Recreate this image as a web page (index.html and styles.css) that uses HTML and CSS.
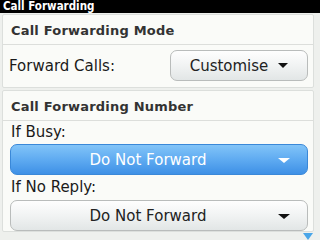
FILE: index.html
```html
<!doctype html>
<html lang="en">
<head>
<meta charset="utf-8">
<title>Call Forwarding</title>
<link rel="stylesheet" href="styles.css">
</head>
<body>

	<header class="titlebar">Call Forwarding</header>

	<main class="screen">

		<section class="card">
			<h2 class="card-title">Call Forwarding Mode</h2>
			<div class="row">
				<span class="label">Forward Calls:</span>
				<button class="picker picker-short">Customise <span class="caret"></span></button>
			</div>
		</section>

		<section class="card">
			<h2 class="card-title">Call Forwarding Number</h2>
			<div class="field">
				<div class="label">If Busy:</div>
				<button class="picker picker-wide focused"><span class="picker-text">Do Not Forward</span><span class="caret"></span></button>
			</div>
			<div class="field">
				<div class="label">If No Reply:</div>
				<button class="picker picker-wide"><span class="picker-text">Do Not Forward</span><span class="caret"></span></button>
			</div>
		</section>

	</main>

	<div class="more-arrow"></div>

</body>
</html>
```

FILE: styles.css
```css
html, body { margin: 0; padding: 0; }
body { width: 320px; height: 240px; overflow: hidden; background: #eef0ed; font-family: "DejaVu Sans", sans-serif; color: #222; position: relative; }

.titlebar { background: #000; color: #fff; height: 13px; font: bold 11.5px/13px "DejaVu Sans Condensed", "DejaVu Sans", sans-serif; padding-left: 3px; }

.screen { padding: 1px 6px 0 2px; }

.card { background: #fafbf8; border: 1px solid #dcdfdc; border-radius: 2px; margin-bottom: 2px; }

.card-title { margin: 0; height: 29px; line-height: 32px; padding-left: 8px; font-size: 13px; font-weight: bold; color: #333; border-bottom: 1px solid #dcdedb; letter-spacing: 0.2px; }

.row { display: flex; align-items: center; justify-content: space-between; padding: 5px 5px 6px 6px; }
.label { font-size: 15px; color: #1a1a1a; }

.picker { font-family: "DejaVu Sans", sans-serif; font-size: 15px; color: #222; height: 31px; border: 1px solid #b9bcbb; border-radius: 7px; background: linear-gradient(#fefefe, #f1f3f3 50%, #e2e6e6); display: flex; align-items: center; justify-content: center; gap: 10px; padding: 0; cursor: pointer; }
.picker-short { width: 138px; }

.caret { display: inline-block; width: 0; height: 0; border-left: 5px solid transparent; border-right: 5px solid transparent; border-top: 5px solid #111; }

.field { padding: 0 5px 0 7px; }
.field .label { height: 23px; line-height: 23px; padding-left: 1px; }
.field + .field .label { height: 25px; line-height: 24px; }

.picker-wide { width: 298px; position: relative; padding-right: 22px; }
.picker-wide .caret { position: absolute; right: 17px; top: 13px; border-left-width: 6px; border-right-width: 6px; }

.focused { background: linear-gradient(#82c4f8, #5fabf1 50%, #3e90e6); border-color: #3a88d8; color: #fff; }
.focused .caret { border-top-color: #fff; }

.more-arrow { position: absolute; right: 7px; bottom: 0; width: 0; height: 0; border-left: 5px solid transparent; border-right: 5px solid transparent; border-top: 7px solid #4aa6e8; }
```
